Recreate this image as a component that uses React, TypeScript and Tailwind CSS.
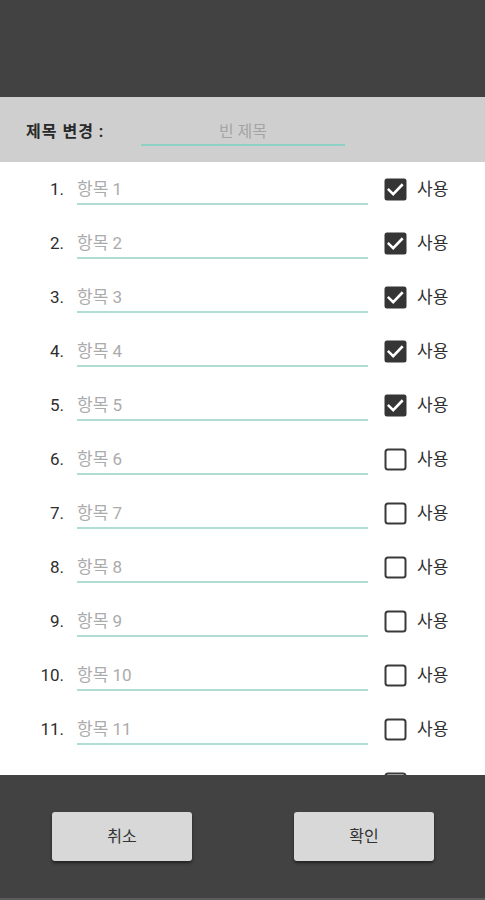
const FONT = { fontFamily: 'Roboto, "Noto Sans CJK KR", sans-serif' }

const items = Array.from({ length: 11 }, (_, i) => ({ no: i + 1, checked: i < 5 }))

function CheckBox({ checked }: { checked: boolean }) {
  return (
    <svg width="23" height="23" viewBox="0 0 23 23" className="shrink-0">
      {checked ? (
        <>
          <rect x="0.5" y="0.5" width="22" height="22" rx="2.5" fill="#353535" />
          <path d="M4.8 11.8l4.4 4.4 8.6-9" fill="none" stroke="#fff" strokeWidth="2.6" strokeLinecap="square" />
        </>
      ) : (
        <rect x="1.5" y="1.5" width="20" height="20" rx="2.5" fill="none" stroke="#3a3a3a" strokeWidth="2" />
      )}
    </svg>
  )
}

export default function App() {
  return (
    <div className="w-[485px] h-[900px] flex flex-col overflow-hidden bg-white" style={FONT}>
      <div className="h-[97px] shrink-0 bg-[#424242]" />

      {/* title edit */}
      <div className="h-[65px] shrink-0 bg-[#cfcfcf] flex items-start pt-[25px] pl-[26px]">
        <div className="w-[115px] h-[20px] leading-[20px] text-[16px] font-bold tracking-[1px] text-[#2a2a2a]">제목 변경 :</div>
        <div className="w-[204px] pb-[2px] border-b-2 border-[#8fd0c4]">
          <div className="h-[20px] leading-[20px] text-center text-[16px] text-[#a4a4a4]">빈 제목</div>
        </div>
      </div>

      {/* item list */}
      <div className="flex-1 overflow-hidden">
        {items.map(item => (
          <div key={item.no} className="h-[54px] flex items-start pt-[17px]">
            <div className="w-[64px] h-[20px] leading-[20px] text-right text-[17px] text-[#2e2e2e]">{item.no}.</div>
            <div className="ml-[13px] w-[291px] pb-[4px] border-b-2 border-[#b0ddd4]">
              <div className="h-[20px] leading-[20px] text-[17px] text-[#ababab]">항목 {item.no}</div>
            </div>
            <div className="ml-[16px] h-[20px] flex items-center">
              <CheckBox checked={item.checked} />
            </div>
            <div className="ml-[10px] h-[20px] leading-[20px] text-[17px] text-[#2e2e2e]">사용</div>
          </div>
        ))}
        {/* next row, hidden under the footer */}
        <div className="h-[54px] flex items-start pt-[17px] pl-[384px]">
          <div className="h-[20px] flex items-center">
            <CheckBox checked={false} />
          </div>
        </div>
      </div>

      {/* buttons */}
      <div className="h-[125px] shrink-0 bg-[#424242] border-b-2 border-[#5c5c5c] flex items-start pt-[37px] pl-[52px]">
        <button className="w-[140px] h-[49px] rounded-[3px] bg-[#d7d8d7] text-[16px] text-[#333] shadow-[0_2px_3px_rgba(0,0,0,0.5)]">
          취소
        </button>
        <button className="ml-[102px] w-[140px] h-[49px] rounded-[3px] bg-[#d7d8d7] text-[16px] text-[#333] shadow-[0_2px_3px_rgba(0,0,0,0.5)]">
          확인
        </button>
      </div>
    </div>
  )
}
